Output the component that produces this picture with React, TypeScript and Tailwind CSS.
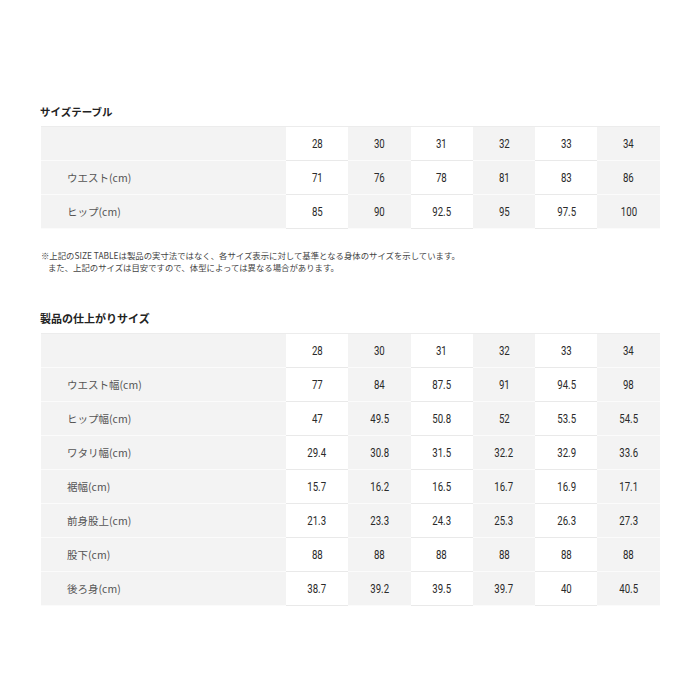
const sizes = ["28", "30", "31", "32", "33", "34"];

const sizeTable = [
  { label: "ウエスト(cm)", values: ["71", "76", "78", "81", "83", "86"] },
  { label: "ヒップ(cm)", values: ["85", "90", "92.5", "95", "97.5", "100"] },
];

const finishedTable = [
  { label: "ウエスト幅(cm)", values: ["77", "84", "87.5", "91", "94.5", "98"] },
  { label: "ヒップ幅(cm)", values: ["47", "49.5", "50.8", "52", "53.5", "54.5"] },
  { label: "ワタリ幅(cm)", values: ["29.4", "30.8", "31.5", "32.2", "32.9", "33.6"] },
  { label: "裾幅(cm)", values: ["15.7", "16.2", "16.5", "16.7", "16.9", "17.1"] },
  { label: "前身股上(cm)", values: ["21.3", "23.3", "24.3", "25.3", "26.3", "27.3"] },
  { label: "股下(cm)", values: ["88", "88", "88", "88", "88", "88"] },
  { label: "後ろ身(cm)", values: ["38.7", "39.2", "39.5", "39.7", "40", "40.5"] },
];

type Row = { label: string; values: string[] };

function SizeGrid({ rows }: { rows: Row[] }) {
  const all: Row[] = [{ label: "", values: sizes }, ...rows];
  return (
    <div className="w-[619px] border-t border-[#ececec]">
      {all.map((row, r) => (
        <div key={r} className="flex h-[34px]">
          <div className="w-[245px] bg-[#f3f3f3] border-b border-[#fbfbfb] pl-[26px] flex items-center text-[10.5px] text-[#555] font-['Noto_Sans_CJK_JP',sans-serif]">
            {row.label}
          </div>
          {row.values.map((v, i) => (
            <div
              key={i}
              className={
                i % 2 === 0
                  ? "w-[62.3px] bg-white border-b border-[#e9e9e9] flex items-center justify-center"
                  : "w-[62.3px] bg-[#f3f3f3] border-b border-[#fbfbfb] flex items-center justify-center"
              }>
              <span className="inline-block scale-x-[0.74] text-[13px] text-[#2a2a2a] font-['Roboto',sans-serif]">
                {v}
              </span>
            </div>
          ))}
        </div>
      ))}
    </div>
  );
}

export default function App() {
  return (
    <div className="w-[700px] h-[700px] bg-white pl-[41px] pt-[104px] font-['Noto_Sans_CJK_JP',sans-serif]">
      <h2 className="text-[10.5px] leading-[15px] font-bold text-[#222] mb-[7px] -ml-px">サイズテーブル</h2>
      <SizeGrid rows={sizeTable} />
      <div className="mt-[20px] text-[8.4px] leading-[12px] text-[#444]">
        <p>※上記のSIZE TABLEは製品の実寸法ではなく、各サイズ表示に対して基準となる身体のサイズを示しています。</p>
        <p className="pl-[7px]">また、上記のサイズは目安ですので、体型によっては異なる場合があります。</p>
      </div>
      <h2 className="mt-[38px] text-[11px] leading-[15px] font-bold text-[#222] mb-[7px] -ml-px">製品の仕上がりサイズ</h2>
      <SizeGrid rows={finishedTable} />
    </div>
  );
}
